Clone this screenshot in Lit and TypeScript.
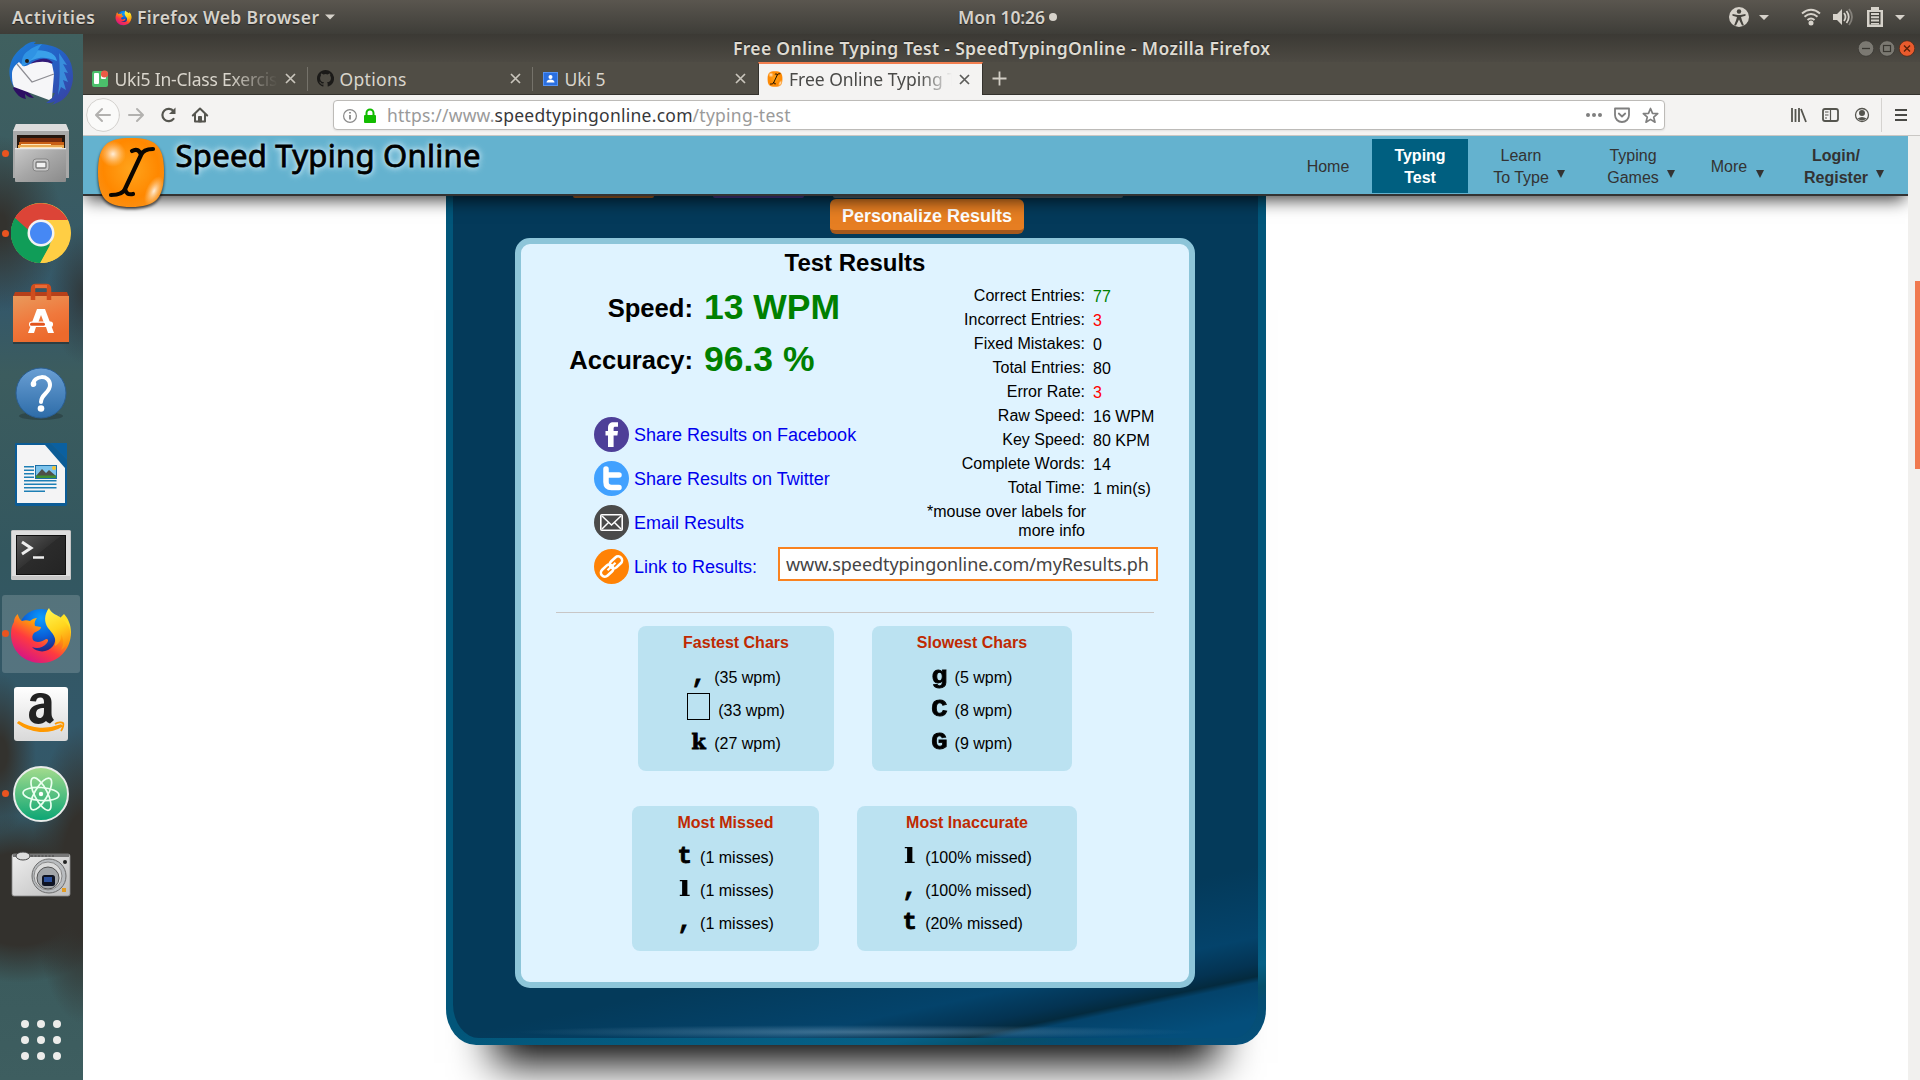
import { LitElement, html, svg, css } from "lit";
import { customElement, property } from "lit/decorators.js";
import { classMap } from "lit/directives/class-map.js";

/** One line of text whose tracking is adjusted so that it fills a given width. */
@customElement("fit-text")
class FitText extends LitElement {
  @property({ type: Number }) w = 0;
  @property() text = "";
  static styles = css`
    :host { display: inline-block; white-space: pre; flex: none; }
    .run { display: inline-block; }
  `;
  updated() {
    const run = this.renderRoot.querySelector(".run") as HTMLElement;
    run.style.letterSpacing = "0";
    const natural = run.getBoundingClientRect().width;
    const n = this.text.length;
    if (this.w && n > 1) {
      const gap = (this.w - natural) / (n - 1);
      run.style.letterSpacing = `${gap}px`;
      run.style.marginRight = `${-gap}px`;
    }
  }
  render() {
    return html`<span class="run">${this.text}</span>`;
  }
}

const caret = html`<svg class="caret" width="10" height="6" viewBox="0 0 10 6"><path d="M0 .5h10L5 5.5z" fill="#d6d2ca"/></svg>`;

const firefoxArt = svg`
  <defs>
    <linearGradient id="fxBody" x1=".8" y1=".1" x2=".2" y2=".95">
      <stop offset="0" stop-color="#ffe226"/><stop offset=".3" stop-color="#ff9a0b"/>
      <stop offset=".6" stop-color="#ff3b3f"/><stop offset="1" stop-color="#d3128a"/>
    </linearGradient>
    <radialGradient id="fxGlobe" cx=".5" cy=".2" r=".8">
      <stop offset="0" stop-color="#0a9dff"/><stop offset=".5" stop-color="#0a5fd8"/><stop offset="1" stop-color="#2b1a6b"/>
    </radialGradient>
    <linearGradient id="fxTail" x1=".3" y1="0" x2=".6" y2="1">
      <stop offset="0" stop-color="#fff44f"/><stop offset=".5" stop-color="#ffd51e"/><stop offset="1" stop-color="#ff8a0d"/>
    </linearGradient>
  </defs>
  <circle cx="32" cy="30" r="23" fill="url(#fxGlobe)"/>
  <path d="M9 13c1 3 2 5 4 6 3-1 5-1 8 0 2-2 5-3 7-3-2 2-3 5-2 8l6 1c0 3-4 4-7 6-2 2-2 5-1 7 4 4 10 1 13-1 2 0 3 1 1 4-4 5-10 6-15 4 5 6 16 6 21-1 4-6 3-14-1-20l12-12c4 4 7 11 7 18 0 18-13 31-30 31S2 49 2 32c0-5 1-9 3-12 0-3 1-6 4-8z" fill="url(#fxBody)"/>
  <path d="M40 6c-5 7-5 14-1 20 4 5 9 9 7 18 5-3 7-8 6-12 3 5 3 11 0 16 7-4 10-12 9-19-1-6-4-9-8-12-1-1-3-2-3-5 0 1 0 2 1 3-5-3-9-4-11-9z" fill="url(#fxTail)"/>`;

const cursorBadge = svg`
  <defs>
    <radialGradient id="badge" cx=".5" cy=".45" r=".7">
      <stop offset="0" stop-color="#ffa41c"/><stop offset=".6" stop-color="#ff8800"/><stop offset="1" stop-color="#f79422"/>
    </radialGradient>
    <radialGradient id="badgeGlow"><stop offset="0" stop-color="#fff" stop-opacity=".85"/><stop offset="1" stop-color="#ffd9a0" stop-opacity="0"/></radialGradient>
  </defs>
  <path d="M34 1C58 1 67 8 67 35S58 70 34 70 1 62 1 35 10 1 34 1z" fill="url(#badge)"/>
  <ellipse cx="16" cy="17" rx="13" ry="13" fill="url(#badgeGlow)"/>
  <ellipse cx="57" cy="54" rx="8" ry="16" transform="rotate(25 57 54)" fill="url(#badgeGlow)"/>
  <path d="M35 14c5-3 8 0 9 4 2-5 6-6 12-6M44 18L28 52M28 52c-2 5-7 6-14 6M28 52c1 4 3 6 8 5" fill="none" stroke="#0a0600" stroke-width="4.200" stroke-linecap="round" stroke-linejoin="round"/>`;

const dockIcons: { name: string; running?: boolean; active?: boolean; art: unknown }[] = [
  { name: "mail", art: svg`
    <defs><linearGradient id="tb" x1="0" y1="0" x2="1" y2="1"><stop offset="0" stop-color="#1b7fd6"/><stop offset=".5" stop-color="#2560c4"/><stop offset="1" stop-color="#3a3fa0"/></linearGradient></defs>
    <path d="M14 6c4-4 9-6 13-5-1 1-2 1-2 2 16-1 39 4 39 32 0 16-9 26-22 29 2-1 3-2 4-4-3 2-6 2-9 2 3-2 7-5 9-10L8 50C2 44-1 34 1 25 3 16 8 10 14 6z" fill="url(#tb)"/>
    <path d="M4 47c3 6 7 10 13 11-1-2-1-4-1-5 3 3 6 4 9 4L10 42z" fill="#2d0f63"/>
    <path d="M12 26c2-13 10-19 24-16 6 1 11 4 12 10-10-4-21-6-32 4z" fill="#3aa0ea"/>
    <path d="M22 22c10-6 18-5 22 0l-20 4z" fill="#331a78"/>
    <path d="M3 33c0-5 3-9 7-12l4 4c2 1 5-1 7-2 9-3 17-3 22 0l2 10-2 24-3 2L5 46C3 42 3 37 3 33z" fill="#f6f6f8"/>
    <path d="M8 23l15 18 22-8" fill="none" stroke="#8d8d93" stroke-width="1.200"/>
    <path d="M13 25c-1-6 1-12 6-15 5-4 10-6 14-7-3 3-4 6-6 10-3 5-7 7-14 12z" fill="#2f93e4"/>
    <circle cx="18" cy="20" r="2" fill="#231a12"/>
    <path d="M50 12l8 12-4-1 5 9-4-1 4 10-5-2 3 10-5-3-3 8c2-14 2-28 1-42z" fill="#3ea4e8" opacity=".7"/>` },
  { name: "files", running: true, art: svg`
    <defs><linearGradient id="cab" x1="0" y1="0" x2="1" y2="1"><stop offset="0" stop-color="#c9c9c9"/><stop offset=".5" stop-color="#a6a6a6"/><stop offset="1" stop-color="#8a8a8a"/></linearGradient></defs>
    <path d="M7 3h50l3 7v47H4V10z" fill="#a9a9a9"/><path d="M7 3h50l3 7H4z" fill="#dcdcdc"/>
    <path d="M8 14h48v16H8z" fill="#24170f"/><path d="M11 17h42v4H11z" fill="#7b2d0c"/><path d="M10 21h45v3H10z" fill="#c95f14"/><path d="M9 24h46v3H9z" fill="#e9a950"/><path d="M9 27h47v4H9z" fill="#d9822b"/><path d="M12 23h30v1H12zM11 26h42v1H11z" fill="#ffe3b5"/>
    <rect x="6" y="27" width="51" height="34" rx="1" fill="url(#cab)"/>
    <path d="M6 27h51v1.200H6z" fill="#e8e8e8"/>
    <rect x="24" y="38" width="16" height="12" rx="3" fill="#c9c9c9" stroke="#858585"/><rect x="27" y="41" width="10" height="6" rx="1" fill="#f1f1f1" stroke="#777" stroke-width="1.300"/>` },
  { name: "chrome", running: true, art: svg`
    <circle cx="32" cy="32" r="30" fill="#ffce44"/>
    <path d="M32 32L6 17A30 30 0 0 1 58.500 19H32z" fill="#dc4437"/>
    <path d="M6 17A30 30 0 0 0 31 62L43 39 32 32z" fill="#109d58"/>
    <path d="M32 19h26.500A30 30 0 0 1 31 62l12-22z" fill="#ffce44"/>
    <path d="M6 17A30 30 0 0 1 58.500 19H32c-7 0-11 5-12.500 10z" fill="#dc4437"/>
    <path d="M6 17A30 30 0 0 0 31 62l10-18c-7 3-15 1-20-6z" fill="#109d58"/>
    <circle cx="32" cy="32" r="13.500" fill="#f3f3f3"/><circle cx="32" cy="32" r="11" fill="#4688f4"/>` },
  { name: "software", art: svg`
    <defs><linearGradient id="bag" x1="0" y1="0" x2=".4" y2="1"><stop offset="0" stop-color="#e99a5c"/><stop offset=".6" stop-color="#f0783c"/><stop offset="1" stop-color="#ec6a2c"/></linearGradient></defs>
    <path d="M4 61h56v2H4z" fill="#222" opacity=".5"/><path d="M6 11h52l2 5H4z" fill="#b6401a"/>
    <path d="M4 15h56v46H4z" fill="url(#bag)"/>
    <path d="M24 19V8q0-3 3-3h10q3 0 3 3v11" fill="none" stroke="#cf4d1d" stroke-width="4.500"/><path d="M26 4h12v3H26z" fill="#e96a35"/>
    <path d="M28 28h8l9 24h-6l-2-6H27l-2 6h-6zm4 6l-3 8h6z" fill="#fff"/>
    <rect x="20" y="40.500" width="24" height="5.500" rx="2.500" fill="#fff"/><rect x="21" y="41.700" width="15" height="3" rx="1.500" fill="#e2531c"/>` },
  { name: "help", art: svg`
    <defs><linearGradient id="hp" x1="0" y1="0" x2="0" y2="1"><stop offset="0" stop-color="#6a9fd4"/><stop offset="1" stop-color="#2d6ca8"/></linearGradient></defs>
    <ellipse cx="32" cy="55" rx="22" ry="4" fill="#111" opacity=".25"/>
    <circle cx="32" cy="32" r="25" fill="url(#hp)" stroke="#2b5f94" stroke-width="1"/>
    <path d="M24 24c0-10 17-11 17 0 0 8-9 9-9 17" fill="none" stroke="#fff" stroke-width="4" stroke-linecap="round"/><circle cx="24.500" cy="23" r="2.800" fill="#fff"/><circle cx="32" cy="47.500" r="3.300" fill="#fff"/>` },
  { name: "writer", art: svg`
    <path d="M7 1h34l17 17v44q0 2-2 2H8q-2 0-2-2V2q0-1 1-1z" fill="#0c5c96"/><path d="M41 1h17v17z" fill="#0b60a0"/>
    <path d="M8 3h28l20 23v35H8z" fill="#f4f4f5"/>
    <path d="M15 24h10v1.500H15zm0 3.500h10V29H15zm0 3.500h10v1.500H15zm0 3.500h10V36H15zm0 3.500h32.500v1.500H15zm0 3.500h32.500V43H15zm0 3.500h32.500v1.500H15zm0 3.500h21V50H15z" fill="#1d7fb5"/>
    <rect x="26.500" y="23.500" width="21" height="13" fill="#7cc3ec" stroke="#1d6ea5"/><path d="M27 34l6-7 4 4 3-3 7 6z" fill="#4d4f48"/><path d="M27 33.500h20V36H27z" fill="#3f8f33"/><circle cx="45" cy="26" r="2" fill="#f4c430"/>` },
  { name: "terminal", art: svg`
    <defs><linearGradient id="tm" x1="0" y1="0" x2="1" y2="1"><stop offset="0" stop-color="#5a5a5a"/><stop offset=".45" stop-color="#333"/><stop offset=".46" stop-color="#2b2b2b"/><stop offset="1" stop-color="#242424"/></linearGradient></defs>
    <g transform="translate(0 1)"><rect x="2" y="7" width="60" height="50" rx="1.500" fill="#c6c6c6"/><rect x="3" y="8" width="58" height="45" fill="#dedede"/>
    <rect x="7" y="12" width="50" height="40" fill="#101010"/><rect x="8" y="13" width="48" height="38" fill="url(#tm)"/>
    <path d="M13 19l9 6-9 6" fill="none" stroke="#eee" stroke-width="3"/><path d="M24 34.500h11" stroke="#eee" stroke-width="2.500"/></g>` },
  { name: "firefox", running: true, active: true, art: firefoxArt },
  { name: "amazon", art: svg`
    <defs><linearGradient id="az" x1="0" y1="0" x2="0" y2="1"><stop offset="0" stop-color="#fff"/><stop offset="1" stop-color="#d9d9d9"/></linearGradient></defs>
    <rect x="5" y="5" width="54" height="54" rx="3" fill="url(#az)"/>
    <path d="M37 39c-5 5-17 4-17-6 0-9 8-11 15-11.500V20c0-3-1-4.500-3.500-4.500-3 0-4 1.500-4.500 4l-6-.6C22 12.500 27 11 32 11c7 0 10.500 3.500 10.500 9v11c0 3 .5 4.500 2.500 7l-4 3.500c-1.500-.5-3-1.500-4-2.500zm-2-13c-5 0-8 1.500-8 6 0 5 6 5.500 7.500 1 .5-2 .5-4 .5-7z" fill="#222"/>
    <path d="M9 41c13 10 31 11 44 3l-1-1c-13 5-29 5-42-3z" fill="#ff9900" stroke="#ff9900" stroke-width="1.500"/><path d="M46 42c3-2 7-2 8-1s0 5-2 8" fill="none" stroke="#ff9900" stroke-width="1.800"/>` },
  { name: "atom", running: true, art: svg`
    <defs><linearGradient id="at" x1="0" y1="0" x2="0" y2="1"><stop offset="0" stop-color="#a5dc8d"/><stop offset="1" stop-color="#0aa574"/></linearGradient></defs>
    <circle cx="32" cy="32" r="27" fill="url(#at)" stroke="#e9ecea" stroke-width="2"/>
    <g fill="none" stroke="#eafff0" stroke-width="1.700"><ellipse cx="32" cy="32" rx="18" ry="6.500" transform="rotate(4 32 32)"/><ellipse cx="32" cy="32" rx="18" ry="6.500" transform="rotate(63 32 32)"/><ellipse cx="32" cy="32" rx="18" ry="6.500" transform="rotate(-60 32 32)"/></g><circle cx="32" cy="32" r="2.200" fill="#fff"/>` },
  { name: "camera", art: svg`
    <defs><linearGradient id="cm" x1="0" y1="0" x2="1" y2="1"><stop offset="0" stop-color="#eee"/><stop offset="1" stop-color="#bdbdbd"/></linearGradient></defs>
    <rect x="3" y="12" width="58" height="42" rx="2" fill="url(#cm)" stroke="#888" stroke-width=".8"/><path d="M4 12h56v3H4z" fill="#777"/>
    <path d="M22 14h24" stroke="#444" stroke-dasharray="2 1.500"/><ellipse cx="14" cy="14" rx="7" ry="4" fill="#ddd" stroke="#444"/>
    <circle cx="40" cy="34" r="17" fill="#b9bcbf" stroke="#6d6d6d"/><circle cx="39" cy="34" r="14" fill="#dadada" stroke="#888"/><circle cx="39" cy="36" r="11" fill="#a3a6a9" stroke="#555"/><rect x="33" y="33" width="13" height="11" rx="2.500" fill="#0e1322"/><path d="M35 35h8v5h-8z" fill="#2b4f9a"/>
    <circle cx="56" cy="20" r="2" fill="#222"/><rect x="53" y="46" width="4" height="4" fill="#e19b22"/>` },
];

const shareIcons = {
  facebook: svg`<circle cx="17.500" cy="17.500" r="17.500" fill="#4e3f98"/><path d="M14 30V18.500h-2.500V14H14v-3c0-4 2-5.800 5.500-5.800H24v4.600h-2.600c-1.400 0-1.800.6-1.800 1.900V14H24l-.6 4.500h-3.800V30z" fill="#fff"/>`,
  twitter: svg`<circle cx="17.500" cy="17.500" r="17.500" fill="#41a1ff"/><path d="M12 8v13q0 5.500 5.500 5.500H25M12 14h13" fill="none" stroke="#fff" stroke-width="5.500" stroke-linecap="round"/>`,
  email: svg`<circle cx="17.500" cy="17.500" r="17.500" fill="#4a4a4a"/><rect x="6.800" y="9.800" width="21.400" height="15.400" rx="1" fill="none" stroke="#fff" stroke-width="1.600"/><path d="M8 11l9.500 9L27 11M8 24l6.500-6.500M27 24l-6.500-6.500" fill="none" stroke="#fff" stroke-width="1.500"/>`,
  link: svg`<circle cx="17.500" cy="17.500" r="17.500" fill="#ff8205"/><g fill="none" stroke="#fff" stroke-width="2.600" transform="rotate(-43 17.500 17.500)"><rect x="4.500" y="13.500" width="14" height="8" rx="4"/><rect x="16.500" y="13.500" width="14" height="8" rx="4"/><path d="M12 17.500h11" stroke-width="2.200"/></g>`,
};

const stats: [string, string, string][] = [
  ["Correct Entries:", "77", "good"],
  ["Incorrect Entries:", "3", "bad"],
  ["Fixed Mistakes:", "0", ""],
  ["Total Entries:", "80", ""],
  ["Error Rate:", "3", "bad"],
  ["Raw Speed:", "16 WPM", ""],
  ["Key Speed:", "80 KPM", ""],
  ["Complete Words:", "14", ""],
  ["Total Time:", "1 min(s)", ""],
];

type CharBox = { title: string; size: string; rows: [string, string][] };
const charRows: CharBox[][] = [
  [
    { title: "Fastest Chars", size: "w196", rows: [[",", "(35 wpm)"], [" ", "(33 wpm)"], ["k", "(27 wpm)"]] },
    { title: "Slowest Chars", size: "w200", rows: [["g", "(5 wpm)"], ["C", "(8 wpm)"], ["G", "(9 wpm)"]] },
  ],
  [
    { title: "Most Missed", size: "w187", rows: [["t", "(1 misses)"], ["l", "(1 misses)"], [",", "(1 misses)"]] },
    { title: "Most Inaccurate", size: "w220", rows: [["l", "(100% missed)"], [",", "(100% missed)"], ["t", "(20% missed)"]] },
  ],
];

@customElement("desktop-dock")
class DesktopDock extends LitElement {
  static styles = css`
    :host { display: flex; flex-direction: column; justify-content: space-between; width: 83px; height: 1046px; flex: none;
      background:
        radial-gradient(ellipse 62px 88px at 0 190px, #33322e 10%, rgba(51,50,46,0) 100%),
        radial-gradient(ellipse 34px 70px at 83px 260px, rgba(48,50,49,.8) 0%, rgba(51,50,46,0) 100%),
        radial-gradient(ellipse 36px 80px at 0 720px, #33322e 20%, rgba(51,50,46,0) 100%),
        radial-gradient(ellipse 52px 150px at 83px 840px, #33312d 40%, rgba(51,49,45,0) 100%),
        radial-gradient(ellipse 100px 84px at 20px 865px, #33312d 55%, rgba(51,49,45,0) 100%),
        linear-gradient(#40605f 0, #3b5c61 130px, #34586a 270px, #3c5c5e 340px, #33575f 520px, #33586a 700px, #345763 800px, #3b5b5d 940px, #3e5e60); }
    .slots { display: flex; flex-direction: column; margin-top: -1px; }
    .slot { height: 80.100px; display: grid; grid-template-columns: 9px 64px 10px; align-items: center; }
    .slot svg { display: block; grid-column: 2; grid-row: 1; }
    .dot { width: 7px; height: 7px; border-radius: 50%; background: #e95420; grid-column: 1; grid-row: 1; margin-left: 2px; z-index: 1; }
    .plate { grid-column: 1 / 4; grid-row: 1; height: 78px; margin: 0 3px 0 2px; border-radius: 3px; background: rgba(255,255,255,.17); }
    .grid { display: grid; grid-template-columns: repeat(3, 8px); gap: 8px; padding: 0 0 20px 21px; }
    .grid i { height: 8px; border-radius: 50%; background: #ececea; }
  `;
  render() {
    return html`
      <div class="slots">
        ${dockIcons.map((d) => html`<div class="slot">
          ${d.active ? html`<span class="plate"></span>` : ""}
          ${d.running ? html`<span class="dot"></span>` : ""}
          <svg width="64" height="64" viewBox="0 0 64 64">${d.art}</svg>
        </div>`)}
      </div>
      <div class="grid">${Array.from({ length: 9 }, () => html`<i></i>`)}</div>`;
  }
}

@customElement("browser-chrome")
class BrowserChrome extends LitElement {
  static styles = css`
    :host { display: block; font: 17.500px "Noto Sans", sans-serif; }
    svg { display: block; flex: none; }
    .title { height: 28px; display: flex; align-items: center; background: linear-gradient(#3b3934, #4d4a43); color: #dfdbd2; font-weight: 600; line-height: 28px; text-shadow: 0 -1px 1px #222; }
    .title fit-text { margin-left: 650px; width: 537px; }
    .buttons { display: flex; gap: 4.500px; margin-left: 588px; }
    .tabs { height: 32px; display: flex; background: #504d45; border-bottom: 1px solid #34322d; }
    .tab { width: 225px; box-sizing: border-box; display: flex; align-items: center; color: #d9d5cc; padding: 1px 0 0 8.500px; position: relative; flex: none; }
    .tab svg:last-child { margin-left: auto; margin-right: 12.500px; }
    .tab.sep::after { content: ""; position: absolute; right: 0; top: 5px; width: 1px; height: 24px; background: #75726a; }
    .label { margin-left: 6px; line-height: 31px; padding-top: 1px; white-space: nowrap; }
    .long { -webkit-mask: linear-gradient(90deg, #000 70%, transparent); }
    .active { background: #f4f3f2; border-top: 2px solid #f27f50; color: #4a4a48; height: 33px; border-right: 1px solid #34322d; border-left: 1px solid #34322d; padding: 0 0 1px 8px; }
    .active .long { -webkit-mask: linear-gradient(90deg, #000 78%, transparent 97%); }
    .plus { margin: 9px 0 0 9px; }
    .bar { height: 40px; background: #f4f3f2; border-bottom: 1px solid #c9c7c4; display: flex; align-items: center; }
    .nav { width: 250px; display: flex; align-items: center; flex: none; }
    .url { width: 1332px; height: 30px; box-sizing: border-box; background: #fff; border: 1px solid #bdbbb8; border-radius: 4px; display: flex; align-items: center; color: #9a9a9a; box-shadow: 0 1px 2px rgba(0,0,0,.08); }
    .url .host { color: #38383a; }
    .url .icons { margin-left: auto; display: flex; align-items: center; gap: 12px; padding-right: 5px; }
    .tools { display: flex; align-items: center; margin-left: 126px; }
  `;
  private close(c: string) {
    return html`<svg width="11" height="11" viewBox="0 0 11 11"><path d="M1 1l9 9M10 1l-9 9" stroke=${c} stroke-width="1.700"/></svg>`;
  }
  render() {
    return html`
      <div class="title">
        <fit-text .w=${537} text="Free Online Typing Test - SpeedTypingOnline - Mozilla Firefox"></fit-text>
        <div class="buttons">
          <svg width="16" height="17" viewBox="0 0 16 17"><circle cx="8" cy="8.500" r="7.800" fill="#7b7972" stroke="#3a3833" stroke-width=".8"/><path d="M4 8.500h8" stroke="#393731" stroke-width="1.300"/></svg>
          <svg width="16" height="17" viewBox="0 0 16 17"><circle cx="8" cy="8.500" r="7.800" fill="#7b7972" stroke="#3a3833" stroke-width=".8"/><rect x="4.500" y="5.500" width="7" height="6" fill="none" stroke="#393731" stroke-width="1.200"/></svg>
          <svg width="16" height="17" viewBox="0 0 16 17"><circle cx="8" cy="8.500" r="7.800" fill="#ea5b2d" stroke="#4a2a1c" stroke-width=".8"/><path d="M5 5.500l6 6M11 5.500l-6 6" stroke="#5b2009" stroke-width="1.400"/></svg>
        </div>
      </div>
      <div class="tabs">
        <div class="tab sep">
          <svg width="17" height="17" viewBox="0 0 17 17"><rect y="1" width="16" height="16" rx="2" fill="#4bbf6b"/><rect x="2" y="3" width="5" height="11" rx="1" fill="#fff"/><rect x="9" y="3" width="5" height="6" rx="1" fill="#fff"/><circle cx="12.500" cy="4" r="3.600" fill="#eb5a46"/></svg>
          <span class="label long"><fit-text .w=${163} text="Uki5 In-Class Exercis"></fit-text></span>${this.close("#c9c5bc")}
        </div>
        <div class="tab sep">
          <svg width="17" height="17" viewBox="0 0 16 16"><path fill="#1b1a18" d="M8 0C3.580 0 0 3.580 0 8c0 3.540 2.290 6.530 5.470 7.590.4.070.55-.17.55-.38v-1.490c-2.010.37-2.530-.49-2.690-.94-.09-.23-.48-.94-.82-1.130-.28-.15-.68-.52-.01-.53.63-.01 1.080.58 1.230.82.72 1.210 1.870.87 2.330.66.070-.52.28-.87.51-1.070-1.780-.2-3.640-.89-3.640-3.950 0-.87.31-1.590.82-2.150-.08-.2-.36-1.020.08-2.120 0 0 .67-.21 2.200.82a7.600 7.600 0 0 1 4 0c1.530-1.040 2.200-.82 2.200-.82.44 1.100.16 1.920.08 2.120.51.56.82 1.270.82 2.150 0 3.070-1.870 3.750-3.650 3.950.29.25.54.73.54 1.480v2.200c0 .21.15.46.55.38A8 8 0 0 0 8 0z"/></svg>
          <span class="label"><fit-text .w=${67} text="Options"></fit-text></span>${this.close("#c9c5bc")}
        </div>
        <div class="tab">
          <svg width="17" height="16" viewBox="0 0 17 16"><rect x="1" y="1" width="15" height="14" rx="1" fill="#2a6fe0"/><rect x="1.500" y="1.500" width="14" height="13" fill="none" stroke="#5592f2"/><circle cx="8.500" cy="6" r="2" fill="#fff"/><path d="M4.500 11.500c0-4 8-4 8 0z" fill="#fff"/></svg>
          <span class="label"><fit-text .w=${41} text="Uki 5"></fit-text></span>${this.close("#c9c5bc")}
        </div>
        <div class="tab active">
          <svg width="16" height="16" viewBox="0 0 68 71">${cursorBadge}</svg>
          <span class="label long"><fit-text .w=${168} text="Free Online Typing T"></fit-text></span>${this.close("#5c5c5a")}
        </div>
        <svg class="plus" width="15" height="15" viewBox="0 0 15 15"><path d="M7.500 .5v14M.5 7.500h14" stroke="#d2cec5" stroke-width="1.800"/></svg>
      </div>
      <div class="bar">
        <div class="nav">
          <svg width="250" height="40" viewBox="83 95 250 40" fill="none" stroke-width="2" stroke-linecap="round" stroke-linejoin="round">
            <circle cx="103" cy="115" r="16.400" fill="#fafaf9" stroke="#d3d1ce" stroke-width="1"/>
            <path d="M110 115H96.500M102 109l-6 6 6 6" stroke="#b2b1af"/>
            <path d="M129 115h13.500M137 109l6 6-6 6" stroke="#b2b1af"/>
            <path d="M173.500 118.800a6.200 6.200 0 1 1 0-7.600" stroke="#55554f" stroke-width="2.200"/><path d="M175.500 107.500v6.500H169z" fill="#55554f"/>
            <path d="M192.800 115.500l7.200-7 7.200 7M195 114v7.500h10V114" stroke="#55554f"/><path d="M198.500 121.500v-5h3v5z" fill="#55554f" stroke="#55554f" stroke-width="1"/>
          </svg>
        </div>
        <div class="url">
          <svg width="53" height="27" viewBox="334 101 53 27">
            <circle cx="350" cy="115" r="6.400" fill="none" stroke="#8a8a8a" stroke-width="1.200"/><path d="M350 114v4.500M350 111v1.500" stroke="#8a8a8a" stroke-width="1.800"/>
            <rect x="364" y="114" width="12" height="8" rx="1" fill="#12bc00"/><path d="M366.500 114v-2a3.500 3.500 0 0 1 7 0v2" fill="none" stroke="#12bc00" stroke-width="2"/>
          </svg>
          <fit-text .w=${107.5} text="https://www."></fit-text><fit-text class="host" .w=${198} text="speedtypingonline.com"></fit-text><fit-text .w=${98} text="/typing-test"></fit-text>
          <div class="icons">
            <svg width="16" height="16" viewBox="0 0 16 16" fill="#7f7f7f"><circle cx="2" cy="8" r="2"/><circle cx="8" cy="8" r="2"/><circle cx="14" cy="8" r="2"/></svg>
            <svg width="16" height="16" viewBox="0 0 16 16" fill="none" stroke="#7f7f7f" stroke-width="1.800" stroke-linecap="round" stroke-linejoin="round"><path d="M1 1.500h14V8c0 4-3 7-7 7s-7-3-7-7z"/><path d="M4.800 6.500L8 9.500l3.200-3"/></svg>
            <svg width="17" height="17" viewBox="0 0 17 17" fill="none" stroke="#7f7f7f" stroke-width="1.700" stroke-linejoin="round"><path d="M8.500 1.500l2 4.800 5.200.4-4 3.400 1.300 5.100-4.500-2.800L4 15.200l1.300-5.100-4-3.400 5.200-.4z"/></svg>
          </div>
        </div>
        <div class="tools">
          <svg width="128" height="40" viewBox="1791 95 128 40" fill="none" stroke="#55554f" stroke-width="1.800">
            <path d="M1792 108v14M1795.500 109v13M1799 108v14M1801 109l5 13"/>
            <rect x="1823" y="109" width="15" height="12" rx="2"/><path d="M1830.500 109v12M1825 112h3.500M1825 115h3.500M1825 118h2" stroke-width="1.200"/>
            <circle cx="1862" cy="115" r="6.500" stroke-width="1.300"/><circle cx="1862" cy="113" r="3" fill="#55554f" stroke="none"/><path d="M1857.500 118.500q4.500-3 9 0-4.500 4-9 0z" fill="#55554f" stroke="none"/>
            <path d="M1881.500 98v34" stroke="#d5d3d0" stroke-width="1"/>
            <path d="M1895 110h12M1895 115h12M1895 120h12" stroke="#4a4a46"/>
          </svg>
        </div>
      </div>`;
  }
}

@customElement("site-header")
class SiteHeader extends LitElement {
  static styles = css`
    :host { display: flex; height: 58px; background: #64b2cf; border-bottom: 2px solid #333; box-shadow: 0 7px 16px -3px rgba(0,0,0,.75); position: relative; z-index: 2; font: 16px/22px "Liberation Sans", Arial, sans-serif; color: #333; }
    .logo { margin: 1px 0 0 13.500px; flex: none; height: 72px; filter: drop-shadow(0 2px 1.500px rgba(0,0,0,.75)); }
    .name { margin: -8px 0 0 10px; font: 400 31px/54px "Noto Sans", sans-serif; color: #000; -webkit-text-stroke: .8px #000; text-shadow: 0 0 5px #cfeaf5, 0 0 7px #b4dcec, 0 0 9px #b4dcec; }
    nav { display: flex; margin-left: auto; height: 54px; margin-top: 3px; padding-right: 2px; }
    .item { display: flex; align-items: center; justify-content: center; text-align: center; }
    .item span { padding-top: 1px; }
    .w1 { width: 88px; } .w2 { width: 96px; } .w3 { width: 122px; } .w4 { width: 102px; } .w5 { width: 90px; } .w6 { width: 124px; }
    .on { background: #005f80; color: #fff; }
    .bold { font-weight: bold; }
    .item svg { margin: 16px 0 0 8px; }
    .w5 svg { margin: 15px -1px 0 9px; }
  `;
  render() {
    const tri = html`<svg width="8" height="8" viewBox="0 0 8 8"><path d="M0 0h8L4 8z" fill="#333"/></svg>`;
    return html`
      <svg class="logo" width="69" height="72" viewBox="0 0 69 72">${cursorBadge}</svg>
      <fit-text class="name" .w=${305} text="Speed Typing Online"></fit-text>
      <nav>
        <div class="item w1"><span>Home</span></div>
        <div class="item w2 on bold"><span>Typing<br />Test</span></div>
        <div class="item w3"><span>Learn<br />To Type</span>${tri}</div>
        <div class="item w4"><span>Typing<br />Games</span>${tri}</div>
        <div class="item w5"><span>More</span>${tri}</div>
        <div class="item w6 bold"><span>Login/<br />Register</span>${tri}</div>
      </nav>`;
  }
}

@customElement("test-results")
class TestResults extends LitElement {
  static styles = css`
    :host { display: block; box-sizing: border-box; width: 680px; height: 750px; border: 6px solid #8dc5d9; border-radius: 15px; background: #dff3ff; color: #000; font: 16px "Liberation Sans", Arial, sans-serif; }
    h2 { margin: 0; font-size: 24px; line-height: 38px; text-align: center; }
    .top { display: grid; grid-template-columns: 406px 1fr; height: 262px; }
    .scores { display: grid; grid-template-columns: 172px 1fr; column-gap: 11px; line-height: 52px; font-weight: bold; margin-top: -1px; }
    .scores dt { font-size: 25.600px; text-align: right; padding-top: 1px; height: 51px; }
    .scores dd { margin: 0; font-size: 35.500px; color: green; height: 52px; white-space: nowrap; }
    dl { margin: 0; }
    .links { padding: 27.500px 0 0 73px; }
    .share { display: flex; align-items: center; height: 44px; font-size: 18px; color: #0000ee; }
    .share svg { display: block; margin-right: 5px; }
    .share span { padding-top: 2px; }
    .stats { display: grid; grid-template-columns: 158px 1fr; column-gap: 8px; grid-auto-rows: 24px; line-height: 24px; margin-top: 2px; }
    .stats dt { text-align: right; white-space: nowrap; }
    .stats dd { margin: 0; padding-top: 1px; height: 23px; white-space: nowrap; }
    .good { color: green; } .bad { color: red; }
    .stats .note { line-height: 19px; padding-top: 2px; }
    .linkrow { display: flex; align-items: center; padding-left: 73px; height: 44px; margin-top: .5px; }
    .linkrow .share { width: 184px; }
    .url { box-sizing: border-box; width: 380px; height: 34px; border: 2px solid #f98220; background: #fff; padding-left: 6px; font: 18px/30px "Noto Sans", sans-serif; color: #444; margin-top: -14px; margin-bottom: -9px; }
    hr { margin: 23px 35px 13px; border: 0; height: 1px; background: #c8c6c6; }
    .boxes { display: flex; justify-content: center; gap: 38px; margin-bottom: 35px; }
    .boxes + .boxes { padding-right: 1px; }
    .box { box-sizing: border-box; height: 145px; background: #bbe2f1; border-radius: 8px; display: flex; flex-direction: column; align-items: center; }
    .w196 { width: 196px; } .w200 { width: 200px; } .w187 { width: 187px; } .w220 { width: 220px; }
    h3 { margin: 0 0 1px; font-size: 16px; line-height: 33px; color: #bf2a02; }
    .rows { display: grid; grid-template-rows: repeat(3, 33px); }
    .row { display: flex; align-items: baseline; gap: 8px; line-height: 33px; height: 33px; }
    .char { width: 15px; font: bold 24px/33px "Liberation Mono", monospace; -webkit-text-stroke: .8px #000; display: flex; justify-content: center; }
    .round { transform: scaleX(1.13); }
    .slab { font: bold 20.500px/33px "DejaVu Serif", serif; }
    .stem { transform: scaleX(1.5); -webkit-text-stroke: 0; }
    .blank { width: 21px; height: 25px; border: 1px solid #000; margin-left: -4px; }
    .row.space { align-items: flex-start; margin-right: -4px; }
    .row.space span:last-child { padding-top: 1px; }
  `;
  private share(art: unknown, label: string) {
    return html`<div class="share"><svg width="35" height="35" viewBox="0 0 35 35">${art}</svg><span>${label}</span></div>`;
  }
  render() {
    return html`
      <h2>Test Results</h2>
      <div class="top">
        <div>
          <dl class="scores"><dt>Speed:</dt><dd>13 WPM</dd><dt>Accuracy:</dt><dd>96.3 %</dd></dl>
          <div class="links">
            ${this.share(shareIcons.facebook, "Share Results on Facebook")}
            ${this.share(shareIcons.twitter, "Share Results on Twitter")}
            ${this.share(shareIcons.email, "Email Results")}
          </div>
        </div>
        <dl class="stats">
          ${stats.map(([k, v, c]) => html`<dt>${k}</dt><dd class=${c}>${v}</dd>`)}
          <dt class="note">*mouse over labels for<br />more info</dt>
        </dl>
      </div>
      <div class="linkrow">
        ${this.share(shareIcons.link, "Link to Results:")}
        <div class="url"><fit-text .w=${363} text="www.speedtypingonline.com/myResults.ph"></fit-text></div>
      </div>
      <hr />
      ${charRows.map((group) => html`<div class="boxes">
        ${group.map((b) => html`<section class="box ${b.size}">
          <h3>${b.title}</h3>
          <div class="rows">${b.rows.map(([ch, note]) => html`<div class=${classMap({ row: true, space: ch === " " })}>
            ${ch === " "
              ? html`<span class="blank"></span>`
              : html`<span class=${classMap({ char: true, slab: "kl".includes(ch), stem: ch === "l", round: "gCG".includes(ch) })}>${ch}</span>`}<span>${note}</span>
          </div>`)}</div>
        </section>`)}
      </div>`)}`;
  }
}

@customElement("app-root")
class AppRoot extends LitElement {
  static styles = css`
    :host { display: block; width: 1920px; height: 1080px; overflow: hidden; background: #fff; }
    .topbar { height: 34px; display: flex; align-items: center; background: linear-gradient(#5a564f, #3e3d38); color: #d6d2ca; font: 600 17.500px/34px "Noto Sans", sans-serif; text-shadow: 0 1px 1px #222; }
    .topbar .act { margin-left: 12px; width: 83px; }
    .topbar .fx { margin: 0 5px 0 20px; }
    .topbar .app { width: 182px; margin-right: 6px; }
    .topbar .clock { margin-left: 623px; width: 87px; }
    .dot { width: 8px; height: 8px; border-radius: 50%; background: #d6d2ca; margin-left: 4px; }
    .status { margin-left: auto; }
    .desk { display: flex; }
    .window { width: 1837px; height: 1046px; overflow: hidden; }
    .view { display: flex; height: 944px; }
    .page { width: 1825px; overflow: hidden; }
    .scroll { width: 12px; background: #f1f0ee; display: flex; justify-content: flex-end; }
    .scroll i { width: 5px; height: 188px; margin-top: 145px; background: #f07a50; }
    .panel { box-sizing: border-box; margin-left: 363px; width: 820px; height: 849px; padding: 0 8px 7px 7px; border-radius: 0 0 30px 30px / 0 0 36px 36px;
      background: linear-gradient(168deg, #02567a 82%, #066086 92%, #064f6a 94.200%, #054d72 95.500%, #05507c);
      box-shadow: 0 66px 40px -48px #000; }
    .inner { height: 842px; border-radius: 0 0 26px 26px / 0 0 34px 34px; display: flex; flex-direction: column;
      background: radial-gradient(ellipse 340px 7px at 50% 836px, rgba(160,190,215,.38), transparent),
        linear-gradient(168deg, #043a5a 83%, #04436b 90%, #043352 92.700%, #042a3e 93.900%, #04436b 94.500%, #044e7b 98%); }
    .stubs { display: flex; height: 2px; padding-left: 120px; }
    .stubs i { height: 2px; border-radius: 0 0 6px 6px; }
    .s1 { width: 81px; background: #b96a28; margin-right: 59px; } .s2 { width: 91px; background: #4e3f98; margin-right: 29px; } .s3 { width: 290px; background: #5c727d; }
    .button { margin: 1px 0 4px 377px; width: 194px; height: 31px; border-radius: 6px; background: #e67e22; border-bottom: 4px solid #a5581c; color: #fff; font: bold 18px/35px "Liberation Sans", Arial, sans-serif; text-align: center; flex: none; }
    test-results { margin-left: 62px; flex: none; }
  `;
  render() {
    return html`
      <div class="topbar">
        <fit-text class="act" .w=${83} text="Activities"></fit-text>
        <svg class="fx" width="17" height="17" viewBox="0 0 64 64">${firefoxArt}</svg>
        <fit-text class="app" .w=${182} text="Firefox Web Browser"></fit-text>${caret}
        <fit-text class="clock" .w=${87} text="Mon 10:26"></fit-text><span class="dot"></span>
        <svg class="status" width="200" height="34" viewBox="1720 0 200 34" fill="#d6d2ca">
          <circle cx="1739" cy="17" r="10"/><g fill="#45433d"><circle cx="1739" cy="11.500" r="2.200"/><path d="M1732.500 14l5 1h3l5-1v1.800l-4.500 1.200 1 3.500 2 5h-2l-3-6-3 6h-2l2-5 1-3.500-4.500-1.200z"/></g>
          <path d="M1759 15h10l-5 5zM1895 15h10l-5 5z"/>
          <g fill="none" stroke="#d6d2ca" stroke-width="2"><path d="M1802 13.500q9-7.500 18 0M1804.500 16.800q6.500-5.500 13 0M1807.500 20q3.500-3 7 0"/></g><circle cx="1811" cy="23" r="2.500"/>
          <path d="M1833 14h4l5-5v16l-5-5h-4z"/><g fill="none" stroke="#d6d2ca" stroke-width="1.800"><path d="M1844 13q3 4 0 8"/><path d="M1846.500 11q4.500 6 0 12"/><path d="M1849 9q6 8 0 16" opacity=".4"/></g>
          <path d="M1871 7h8v3h4v17h-16V10h4z"/><path d="M1869.500 12h11v12.500h-11z" fill="#45433d"/><path d="M1871 13h8v2h-8zm0 3.300h8v2h-8zm0 3.300h8v2h-8zm0 3.300h8v1.500h-8z"/>
        </svg>
      </div>
      <div class="desk">
        <desktop-dock></desktop-dock>
        <div class="window">
          <browser-chrome></browser-chrome>
          <div class="view">
            <div class="page">
              <site-header></site-header>
              <div class="panel"><div class="inner">
                <div class="stubs"><i class="s1"></i><i class="s2"></i><i class="s3"></i></div>
                <div class="button">Personalize Results</div>
                <test-results></test-results>
              </div></div>
            </div>
            <div class="scroll"><i></i></div>
          </div>
        </div>
      </div>`;
  }
}
